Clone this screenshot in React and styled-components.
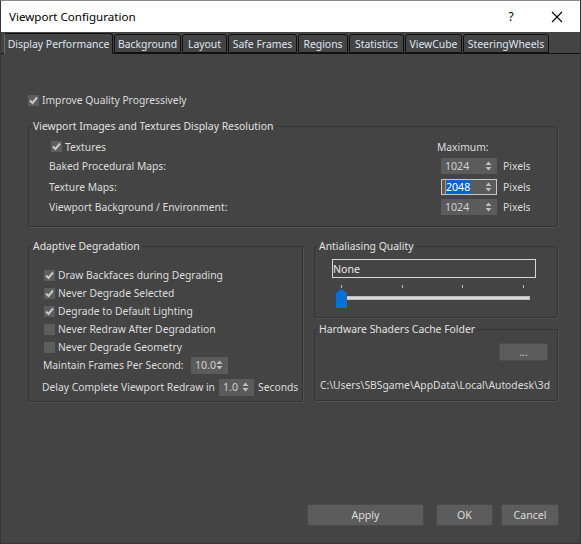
import React from 'react'
import styled, { createGlobalStyle } from 'styled-components'

const GlobalStyle = createGlobalStyle`
  html, body { margin: 0; padding: 0; background: #444444; }
  * { box-sizing: border-box; }
`

const Window = styled.div`
  width: 581px;
  height: 544px;
  display: flex;
  flex-direction: column;
  background: #444444;
  border: 1px solid #363636;
  border-top-color: #8a8a8a;
  font-family: "Segoe UI", "Noto Sans", sans-serif;
  font-size: 10.3px;
  color: #dcdcdc;
  overflow: hidden;
`

const TitleBar = styled.div`
  height: 31px;
  flex: none;
  display: flex;
  align-items: center;
  background: #ffffff;
  color: #000;
  padding-left: 8px;
`

const TitleText = styled.span`
  flex: 1;
  font-size: 11.6px;
`

const TitleButton = styled.span`
  width: 46px;
  height: 31px;
  display: flex;
  align-items: center;
  justify-content: center;
  font-size: 12px;
`

const TabBar = styled.div`
  flex: none;
  display: flex;
  align-items: flex-end;
  height: 22px;
  padding-left: 3px;
  border-bottom: 1px solid #111;
`

const Tab = styled.div`
  width: ${p => p.$w}px;
  height: ${p => (p.$active ? '21px' : '19px')};
  margin-bottom: ${p => (p.$active ? '-1px' : '0')};
  margin-right: 1px;
  display: flex;
  align-items: center;
  justify-content: center;
  border: 1px solid #111;
  border-bottom: ${p => (p.$active ? 'none' : '1px solid #111')};
  border-left-color: ${p => (p.$active ? '#6a6a6a' : '#111')};
  border-radius: 3px 3px 0 0;
  background: #444444;
  color: #dfe6f2;
  font-size: 10.4px;
  white-space: nowrap;
`

const Panel = styled.div`
  flex: 1;
  display: flex;
  flex-direction: column;
  padding: 37px 22px 0 27px;
`

const CheckRow = styled.label`
  display: flex;
  align-items: center;
  gap: 3px;
  height: ${p => p.$h || 18}px;
  padding-left: ${p => p.$indent || 0}px;
  white-space: nowrap;
`

const Box = styled.span`
  width: 11px;
  height: 11px;
  flex: none;
  background: #5d5d5d;
  display: flex;
  align-items: center;
  justify-content: center;
`

const Group = styled.fieldset`
  margin: 0;
  padding: 0;
  border: 1px solid #353535;
  border-radius: 2px;
  box-shadow: 1px 1px 0 #525252;
  min-width: 0;
`

const Legend = styled.legend`
  margin-left: 3px;
  padding: 0 2px 0 1px;
  font-size: 10.4px;
  color: #e2e2e2;
  line-height: 16px;
`

const ResGrid = styled.div`
  display: grid;
  grid-template-columns: 1fr 56px 54px;
  grid-template-rows: 19px 20px 21px 20px;
  column-gap: 6px;
  align-items: center;
  padding: 3px 0 9px 20px;
`

const MaxLabel = styled.span`
  grid-column: 2 / 4;
  margin-left: -4px;
`

const Spin = styled.div`
  width: ${p => p.$w || 56}px;
  height: ${p => p.$h || 16}px;
  display: flex;
  align-items: center;
  background: #5b5b5b;
  border: 1px solid ${p => (p.$focus ? '#c8c8c8' : '#5b5b5b')};
  color: #cdd0d6;
  font-size: 10.6px;
  padding-left: 3px;
  flex: none;
`

const SpinValue = styled.span`
  flex: 1;
  display: flex;
  align-items: center;
`

const Selected = styled.span`
  background: #0a64c8;
  color: #fff;
  border-left: 1px solid #f08a24;
  padding-right: 1px;
  line-height: 14px;
`

const SpinArrows = styled.svg`
  width: 7px;
  height: 10px;
  margin-right: 4px;
`

const Columns = styled.div`
  display: flex;
  gap: 11px;
  margin-top: 11px;
`

const LeftGroup = styled(Group)`
  width: 275px;
  flex: none;
`

const LeftBody = styled.div`
  padding: 12px 0 5px 15px;
`

const RightCol = styled.div`
  flex: 1;
  min-width: 0;
  display: flex;
  flex-direction: column;
  gap: 3px;
`

const FieldRow = styled.div`
  display: flex;
  align-items: center;
  height: 18px;
  margin-top: ${p => p.$mt || 0}px;
  margin-left: ${p => p.$ml || 0}px;
  white-space: nowrap;
`

const FieldLabel = styled.span`
  width: ${p => p.$w}px;
  flex: none;
`

const AABody = styled.div`
  padding: 5px 0 8px 17px;
`

const ComboBox = styled.div`
  width: 204px;
  height: 19px;
  border: 1px solid #d6d6d6;
  display: flex;
  align-items: center;
  font-size: 10.6px;
  color: #e8e8e8;
`

const Slider = styled.div`
  position: relative;
  width: 204px;
  height: 31px;
`

const Ticks = styled.div`
  display: flex;
  justify-content: space-between;
  width: 183px;
  padding-top: 7px;
  margin-left: 9px;
`

const Tick = styled.span`
  width: 1px;
  height: 3px;
  background: #bdbdbd;
`

const Track = styled.div`
  position: absolute;
  left: 14px;
  top: 18px;
  width: 184px;
  height: 4px;
  background: #d9d9d9;
  border: 1px solid #bdbdbd;
`

const Thumb = styled.svg`
  position: absolute;
  left: 4px;
  top: 11px;
  width: 11px;
  height: 19px;
`

const HWBody = styled.div`
  display: flex;
  flex-direction: column;
  padding: 6px 7px 7px 5px;
`

const SmallButton = styled.button`
  align-self: flex-end;
  width: 49px;
  height: 18px;
  margin-right: 2px;
  background: #5c5c5c;
  border: 1px solid #4e4e4e;
  border-radius: 2px;
  color: #cfcfcf;
  font-family: inherit;
  font-size: 10.4px;
  line-height: 10px;
  padding: 0;
`

const PathText = styled.div`
  margin-top: 16px;
  height: 16px;
  line-height: 16px;
  white-space: nowrap;
  overflow: hidden;
  font-size: 10.3px;
`

const Footer = styled.div`
  flex: none;
  display: flex;
  justify-content: flex-end;
  padding: 0 21px 17px 0;
`

const DialogButton = styled.button`
  width: ${p => p.$w}px;
  height: 22px;
  margin-left: ${p => p.$ml || 0}px;
  background: #5c5c5c;
  border: 1px solid #4a4a4a;
  border-radius: 2px;
  color: #dcdcdc;
  font-family: inherit;
  font-size: 10.6px;
  padding: 0;
`

const Check = ({ checked }) => (
  <Box>
    {checked && (
      <svg width="9" height="9" viewBox="0 0 9 9">
        <path d="M1 4.5 L3.5 7 L8 1.5" stroke="#c9c9c9" strokeWidth="2" fill="none" />
      </svg>
    )}
  </Box>
)

const Arrows = () => (
  <SpinArrows viewBox="0 0 7 10">
    <path d="M3.5 0.5 L6.5 4 L0.5 4 Z M0.5 6 L6.5 6 L3.5 9.5 Z" fill="#bdbdbd" />
  </SpinArrows>
)

const Spinner = ({ value, focus, w, h }) => (
  <Spin $focus={focus} $w={w} $h={h}>
    <SpinValue>{focus ? <Selected>{value}</Selected> : value}</SpinValue>
    <Arrows />
  </Spin>
)

const tabs = [
  { label: 'Display Performance', w: 109 },
  { label: 'Background', w: 67 },
  { label: 'Layout', w: 45 },
  { label: 'Safe Frames', w: 69 },
  { label: 'Regions', w: 50 },
  { label: 'Statistics', w: 55 },
  { label: 'ViewCube', w: 57 },
  { label: 'SteeringWheels', w: 86 },
]

const resolutionRows = [
  { label: 'Baked Procedural Maps:', value: '1024' },
  { label: 'Texture Maps:', value: '2048', focus: true },
  { label: 'Viewport Background / Environment:', value: '1024' },
]

const degradeChecks = [
  { label: 'Draw Backfaces during Degrading', checked: true },
  { label: 'Never Degrade Selected', checked: true },
  { label: 'Degrade to Default Lighting', checked: true },
  { label: 'Never Redraw After Degradation', checked: false },
  { label: 'Never Degrade Geometry', checked: false },
]

export default function App() {
  return (
    <>
      <GlobalStyle />
      <Window>
        <TitleBar>
          <TitleText>Viewport Configuration</TitleText>
          <TitleButton>?</TitleButton>
          <TitleButton>
            <svg width="12" height="12" viewBox="0 0 12 12">
              <path d="M1 1 L11 11 M11 1 L1 11" stroke="#000" strokeWidth="1.1" />
            </svg>
          </TitleButton>
        </TitleBar>
        <TabBar>
          {tabs.map((t, i) => (
            <Tab key={t.label} $w={t.w} $active={i === 0}>{t.label}</Tab>
          ))}
        </TabBar>
        <Panel>
          <CheckRow>
            <Check checked /> Improve Quality Progressively
          </CheckRow>

          <Group style={{ marginTop: 9 }}>
            <Legend>Viewport Images and Textures Display Resolution</Legend>
            <ResGrid>
              <CheckRow $indent={2}>
                <Check checked /> Textures
              </CheckRow>
              <MaxLabel>Maximum:</MaxLabel>
              {resolutionRows.map(r => (
                <React.Fragment key={r.label}>
                  <span>{r.label}</span>
                  <Spinner value={r.value} focus={r.focus} />
                  <span>Pixels</span>
                </React.Fragment>
              ))}
            </ResGrid>
          </Group>

          <Columns>
            <LeftGroup>
              <Legend>Adaptive Degradation</Legend>
              <LeftBody>
                {degradeChecks.map(c => (
                  <CheckRow key={c.label}>
                    <Check checked={c.checked} /> {c.label}
                  </CheckRow>
                ))}
                <FieldRow $ml={-1}>
                  <FieldLabel $w={148}>Maintain Frames Per Second:</FieldLabel>
                  <Spinner value="10.0" w={37} h={17} />
                </FieldRow>
                <FieldRow $mt={4} $ml={-2}>
                  <FieldLabel $w={177}>Delay Complete Viewport Redraw in</FieldLabel>
                  <Spinner value="1.0" w={35} h={17} />
                  <span style={{ marginLeft: 4 }}>Seconds</span>
                </FieldRow>
              </LeftBody>
            </LeftGroup>

            <RightCol>
              <Group>
                <Legend>Antialiasing Quality</Legend>
                <AABody>
                  <ComboBox>None</ComboBox>
                  <Slider>
                    <Ticks>
                      <Tick /><Tick /><Tick /><Tick />
                    </Ticks>
                    <Track />
                    <Thumb viewBox="0 0 11 19">
                      <path d="M0 4 L5.5 0 L11 4 L11 19 L0 19 Z" fill="#0a6fd6" />
                    </Thumb>
                  </Slider>
                </AABody>
              </Group>
              <Group>
                <Legend>Hardware Shaders Cache Folder</Legend>
                <HWBody>
                  <SmallButton>...</SmallButton>
                  <PathText>C:\Users\SBSgame\AppData\Local\Autodesk\3ds Max 2020\64bit\ENU\en-US\plugcfg</PathText>
                </HWBody>
              </Group>
            </RightCol>
          </Columns>
        </Panel>
        <Footer>
          <DialogButton $w={117}>Apply</DialogButton>
          <DialogButton $w={57} $ml={12}>OK</DialogButton>
          <DialogButton $w={58} $ml={8}>Cancel</DialogButton>
        </Footer>
      </Window>
    </>
  )
}
